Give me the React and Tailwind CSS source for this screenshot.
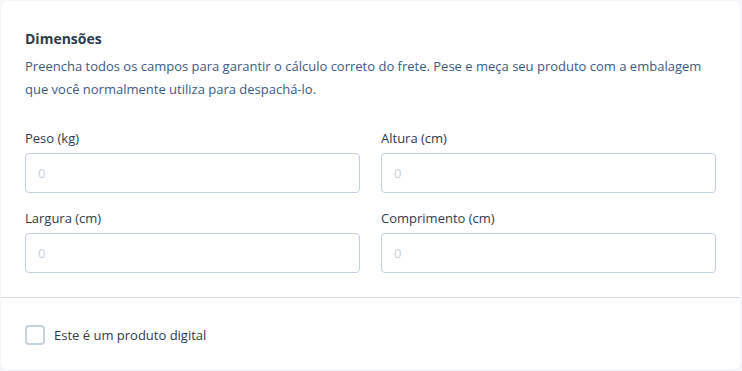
export default function App() {
  const font = { fontFamily: '"Open Sans", "Noto Sans", sans-serif' };
  const Field = ({ label }) => (
    <div className="flex flex-col">
      <label className="text-[13px] leading-[18px] text-[#2f3b4c] mb-[6px]">{label}</label>
      <input
        placeholder="0"
        className="h-[40px] w-full rounded-[4px] border border-[#c5d1de] bg-white px-[12px] text-[13px] text-[#2f3b4c] placeholder:text-[#c9d1db] outline-none"
      />
    </div>
  );
  return (
    <div className="min-h-[371px] w-[742px] bg-[#f4f6f9] pt-[1px] pl-[1px] pr-[2px] pb-[2px]" style={font}>
      <div className="rounded-[6px] bg-white h-[368px] flex flex-col">
        <div className="px-[24px] pt-[28px] pb-[24px]">
          <h2 className="text-[14px] font-bold leading-[20px] text-[#2f3b4c]">Dimensões</h2>
          <p className="mt-[6px] text-[13px] leading-[23px] text-[#3d5a84]">
            Preencha todos os campos para garantir o cálculo correto do frete. Pese e meça seu produto com a embalagem que você normalmente utiliza para despachá-lo.
          </p>
          <div className="mt-[28px] grid grid-cols-2 gap-x-[21px] gap-y-[16px]">
            <Field label="Peso (kg)" />
            <Field label="Altura (cm)" />
            <Field label="Largura (cm)" />
            <Field label="Comprimento (cm)" />
          </div>
        </div>
        <div className="border-t border-[#d3dbe4]" />
        <div className="px-[24px] pt-[26px] flex items-center gap-[9px]">
          <span className="h-[20px] w-[20px] rounded-[4px] border-2 border-[#c5d1de] bg-white" />
          <span className="text-[13px] leading-[20px] text-[#2f3b4c] pt-[1px]">Este é um produto digital</span>
        </div>
      </div>
    </div>
  );
}
